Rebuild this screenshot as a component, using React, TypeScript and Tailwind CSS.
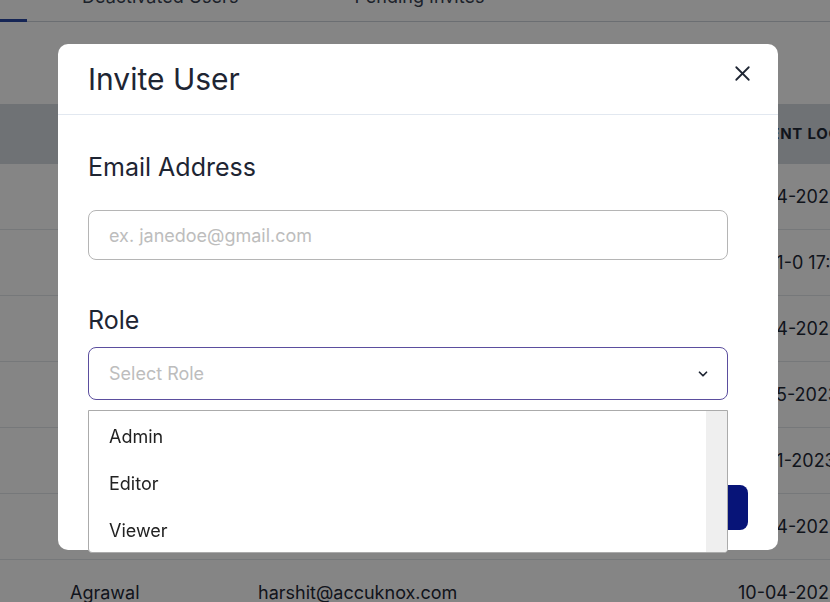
import { ChevronDown, X } from "lucide-react";

type Row = {
    name: string;
    email: string;
    login: string;
};

const rows: Row[] = [
    { name: "Sharma", email: "rahul@accuknox.com", login: "10-04-2023 11:20" },
    { name: "Verma", email: "ankit@accuknox.com", login: "10-01-0 17:45" },
    { name: "Gupta", email: "neha@accuknox.com", login: "10-04-2023 09:12" },
    { name: "Singh", email: "amit@accuknox.com", login: "12-05-2023 14:03" },
    { name: "Kumar", email: "priya@accuknox.com", login: "10-01-2023 16:40" },
    { name: "Jain", email: "rohit@accuknox.com", login: "10-04-2023 10:05" },
    { name: "Agrawal", email: "harshit@accuknox.com", login: "10-04-2023 08:30" },
];

const roles = ["Admin", "Editor", "Viewer", "Owner"];

function UsersPage() {
    return (
        <div className="min-h-screen bg-white text-[#1f2937]">
            <div className="flex h-[22px] items-start border-b border-[#ced3da]">
                <div className="mt-[19px] h-[3px] w-[27px] bg-[#2a48a3]" />
                <span className="-mt-[17px] ml-[55px] text-lg leading-7 text-[#374151]">Deactivated Users</span>
                <span className="-mt-[17px] ml-[116px] text-lg leading-7 text-[#374151]">Pending Invites</span>
            </div>

            <div className="mt-[82px]">
                <div className="grid h-[60px] grid-cols-[258px_480px_1fr] items-center bg-[#d5dae0] text-[15px] font-bold uppercase tracking-wider">
                    <div className="pl-[70px]">Name</div>
                    <div>Email</div>
                    <div className="whitespace-nowrap">Recent Login</div>
                </div>
                {rows.map((row) => (
                    <div
                        key={row.email}
                        className="grid h-[66px] grid-cols-[258px_480px_1fr] items-center border-b border-[#e3e6ea] text-lg"
                    >
                        <div className="pl-[70px]">{row.name}</div>
                        <div>{row.email}</div>
                        <div className="whitespace-nowrap">{row.login}</div>
                    </div>
                ))}
            </div>
        </div>
    );
}

function InviteModal() {
    return (
        <div className="fixed inset-0 bg-black/[0.48] pl-[58px] pt-[44px]">
            <div className="w-[720px] rounded-[10px] bg-white text-[#1e2533]">
                <div className="flex h-[71px] items-center justify-between border-b border-[#e2e8f0] pl-[30px] pr-[23px]">
                    <h2 className="text-[30px] leading-9">Invite User</h2>
                    <button className="-mt-[12px] text-[#1e2533]">
                        <X size={25} strokeWidth={1.7} />
                    </button>
                </div>

                <div className="px-[30px] pb-[20px] pt-[36px]">
                    <label className="block text-[25px] leading-8">Email Address</label>
                    <input
                        placeholder="ex. janedoe@gmail.com"
                        className="mt-[27px] h-[50px] w-[640px] rounded-lg border border-[#b5b5b5] px-5 text-lg outline-none placeholder:text-[#bdbdbd]"
                    />

                    <label className="mt-[44px] block text-[25px] leading-8">Role</label>
                    <div className="relative mt-[11px] w-[640px]">
                        <div className="flex h-[53px] items-center justify-between rounded-lg border border-[#5b4e9e] pl-5 pr-[17px]">
                            <span className="text-lg text-[#bdbdbd]">Select Role</span>
                            <ChevronDown size={14} strokeWidth={3} className="text-[#1e2533]" />
                        </div>

                        <div className="absolute left-0 right-0 top-[63px] z-10 flex h-[143px] overflow-hidden rounded-b-sm border border-[#ababab] bg-white">
                            <ul className="flex-1 pt-[2px]">
                                {roles.map((role) => (
                                    <li key={role} className="flex h-[47px] items-center px-5 text-lg text-[#222]">
                                        {role}
                                    </li>
                                ))}
                            </ul>
                            <div className="w-[21px] bg-[#efefef]" />
                        </div>
                    </div>

                    <div className="mt-[85px] flex justify-end">
                        <button className="h-[45px] w-[150px] rounded-lg bg-[#071478] text-lg font-medium text-white">
                            Send Invite
                        </button>
                    </div>
                </div>
            </div>
        </div>
    );
}

export default function App() {
    return (
        <div className="font-['Inter',sans-serif]">
            <UsersPage />
            <InviteModal />
        </div>
    );
}
